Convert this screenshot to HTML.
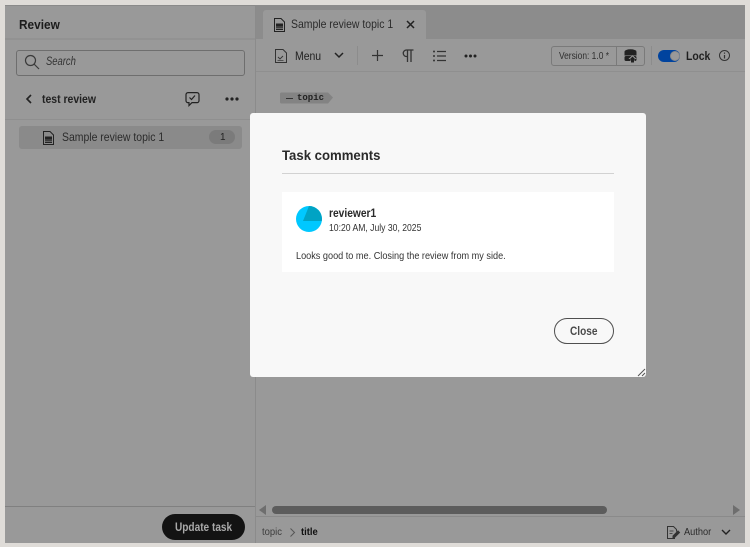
<!DOCTYPE html>
<html><head><meta charset="utf-8"><style>
html,body{margin:0;padding:0;width:750px;height:547px;overflow:hidden;background:#dfdcd8;font-family:"Liberation Sans",sans-serif}
.a{position:absolute}
.t{position:absolute;white-space:nowrap;line-height:1;transform-origin:0 0;letter-spacing:0}
svg{position:absolute;overflow:visible}
</style></head><body>
<div class="a" style="left:5px;top:5px;width:740px;height:538px;background:#999;overflow:hidden"></div>
<div class="a" style="left:5px;top:5px;width:740px;height:1px;background:#8a8a8a"></div>
<!-- left panel -->
<div class="a" style="left:5px;top:38px;width:250px;height:2px;background:#929292"></div>
<div class="a" style="left:255px;top:5px;width:1px;height:538px;background:#8b8b8b"></div>
<div class="t" style="left:19px;top:18px;font-size:13px;font-weight:bold;color:#1c1c1c;transform:scaleX(.91)">Review</div>
<div class="a" style="left:16px;top:50px;width:227px;height:24px;border:1px solid #6e6e6e;border-radius:3px"></div>
<svg style="left:25px;top:55px" width="14" height="14" fill="none" stroke="#3a3a3a" stroke-width="1.200"><circle cx="5.500" cy="5.500" r="5"/><path d="M9 9l5 5"/></svg>
<div class="t" style="left:46px;top:57px;font-size:11.500px;font-style:italic;color:#333;transform:scaleX(.82)">Search</div>
<svg style="left:25px;top:94px" width="8" height="10" fill="none" stroke="#222" stroke-width="1.600"><path d="M6 1L2 5l4 4"/></svg>
<div class="t" style="left:42px;top:93px;font-size:12px;font-weight:bold;color:#222;transform:scaleX(.87)">test review</div>
<svg style="left:185px;top:92px" width="15" height="14" fill="none" stroke="#222" stroke-width="1.200"><path d="M3 .6h9a2 2 0 0 1 2 2v6a2 2 0 0 1-2 2H7l-3 3v-3H3a2 2 0 0 1-2-2v-6a2 2 0 0 1 2-2z"/><path d="M4.500 5.500l2 2 3.500-4"/></svg>
<svg style="left:225px;top:96px" width="14" height="6" fill="#222"><circle cx="2" cy="3" r="1.600"/><circle cx="7" cy="3" r="1.600"/><circle cx="12" cy="3" r="1.600"/></svg>
<div class="a" style="left:5px;top:119px;width:250px;height:1px;background:#8f8f8f"></div>
<div class="a" style="left:19px;top:126px;width:223px;height:23px;background:#8a8a8a;border-radius:3px"></div>
<svg style="left:43px;top:131px" width="11" height="14"><path d="M.5.500h6.500l3.500 3.500v9.500h-10z" fill="#8a8a8a" stroke="#222"/><rect x="2" y="5.500" width="7" height="6.500" fill="#222"/><path d="M2 9h7M2 10.700h7" stroke="#8a8a8a" stroke-width=".6"/></svg>
<div class="t" style="left:62px;top:131px;font-size:12px;color:#2b2b2b;transform:scaleX(.87)">Sample review topic 1</div>
<div class="a" style="left:209px;top:130px;width:26px;height:14px;background:#7b7b7b;border-radius:7px"></div>
<div class="t" style="left:220px;top:133px;font-size:10px;color:#222">1</div>
<!-- bottom left -->
<div class="a" style="left:5px;top:506px;width:250px;height:1px;background:#808080"></div>
<div class="a" style="left:162px;top:514px;width:83px;height:26px;background:#131313;border-radius:13px"></div>
<div class="t" style="left:175px;top:521px;font-size:12px;font-weight:bold;color:#a9a9a9;transform:scaleX(.84)">Update task</div>
<!-- tabs -->
<div class="a" style="left:256px;top:5px;width:489px;height:34px;background:#8c8c8c"></div>
<div class="a" style="left:263px;top:10px;width:163px;height:29px;background:#999;border-radius:3px 3px 0 0"></div>
<svg style="left:274px;top:18px" width="11" height="14"><path d="M.5.500h6.500l3.500 3.500v9.500h-10z" fill="#999" stroke="#222"/><rect x="2" y="5.500" width="7" height="6.500" fill="#222"/><path d="M2 9h7M2 10.700h7" stroke="#999" stroke-width=".6"/></svg>
<div class="t" style="left:291px;top:18px;font-size:12px;color:#2b2b2b;transform:scaleX(.87)">Sample review topic 1</div>
<svg style="left:407px;top:21px" width="7" height="7" stroke="#222" stroke-width="1.500"><path d="M0 0l7 7M7 0L0 7"/></svg>
<div class="a" style="left:256px;top:71px;width:489px;height:1px;background:#8f8f8f"></div>
<!-- toolbar -->
<svg style="left:275px;top:49px" width="12" height="14" fill="none" stroke="#333" stroke-width="1"><path d="M.5.500h7.500l3.500 3.500v9.500h-11z"/><path d="M3 8l2 2 3-3" stroke-width=".9"/><path d="M2.500 11.500h6" stroke-width=".7"/></svg>
<div class="t" style="left:295px;top:50px;font-size:12px;color:#222;transform:scaleX(.87)">Menu</div>
<svg style="left:334px;top:52px" width="10" height="7" fill="none" stroke="#222" stroke-width="1.500"><path d="M1 1l4 4 4-4"/></svg>
<div class="a" style="left:357px;top:46px;width:1px;height:19px;background:#8c8c8c"></div>
<svg style="left:372px;top:50px" width="11" height="11" stroke="#333" stroke-width="1.200"><path d="M5.500 0v11M0 5.500h11"/></svg>
<svg style="left:402px;top:49px" width="12" height="13" fill="none" stroke="#333" stroke-width="1.300"><path d="M5.500 13V1h6M9 1v12M5.500 1H4.500a3.200 3.200 0 0 0 0 6.500h1"/></svg>
<svg style="left:433px;top:50px" width="13" height="12" fill="#333" stroke="#333"><path d="M4 1.500h9M4 6h9M4 10.500h9" stroke-width="1.200"/><circle cx="1" cy="1.500" r="1" stroke="none"/><circle cx="1" cy="6" r="1" stroke="none"/><circle cx="1" cy="10.500" r="1" stroke="none"/></svg>
<svg style="left:464px;top:53px" width="13" height="6" fill="#222"><circle cx="2" cy="3" r="1.500"/><circle cx="6.500" cy="3" r="1.500"/><circle cx="11" cy="3" r="1.500"/></svg>
<div class="a" style="left:551px;top:46px;width:92px;height:18px;border:1px solid #7a7a7a;border-radius:3px"></div>
<div class="a" style="left:616px;top:46px;width:1px;height:20px;background:#7a7a7a"></div>
<div class="t" style="left:559px;top:51px;font-size:10.500px;color:#2e2e2e;transform:scaleX(.8)">Version: 1.0 *</div>
<svg style="left:624px;top:49px" width="13" height="14"><ellipse cx="6.500" cy="2.500" rx="6" ry="2.200" fill="#222"/><rect x=".5" y="3" width="12" height="3.500" fill="#222"/><rect x=".5" y="7" width="12" height="5" rx="1.500" fill="#222"/><path d="M8.500 6l4 4h-2v4h-4v-4h-2z" fill="#999"/><path d="M8.500 7.500l3 3h-1.500v3h-3v-3h-1.500z" fill="#222"/></svg>
<div class="a" style="left:651px;top:46px;width:1px;height:19px;background:#8c8c8c"></div>
<div class="a" style="left:658px;top:50px;width:22px;height:12px;background:#00439e;border-radius:6px"></div>
<div class="a" style="left:670px;top:51px;width:8px;height:8px;background:#999;border-radius:50%;border:1px solid #8a8a8a"></div>
<div class="t" style="left:686px;top:50px;font-size:12px;font-weight:bold;color:#1f1f1f;transform:scaleX(.87)">Lock</div>
<svg style="left:719px;top:50px" width="11" height="11" fill="none" stroke="#333"><circle cx="5.500" cy="5.500" r="5"/><path d="M5.500 5v3.500M5.500 2.500v1.200" stroke-width="1.200"/></svg>
<!-- topic tag -->
<svg style="left:280px;top:92px" width="54" height="12"><path d="M0 1.500Q0 0 1.500 0H48l5 5-5 6H1.500Q0 11 0 9.500z" fill="#838383" transform="translate(0 .5)"/></svg>
<div class="a" style="left:286px;top:98px;width:7px;height:1px;background:#333"></div>
<div class="t" style="left:297px;top:94px;font-family:'Liberation Mono',monospace;font-size:9px;font-weight:bold;color:#222">topic</div>
<!-- modal -->
<div class="a" style="left:250px;top:113px;width:396px;height:264px;background:#f8f8f8;border-radius:3px"></div>
<div class="t" style="left:282px;top:148px;font-size:14px;font-weight:bold;color:#2a2a2a;transform:scaleX(.94)">Task comments</div>
<div class="a" style="left:282px;top:173px;width:332px;height:1px;background:#d2d2d2"></div>
<div class="a" style="left:282px;top:192px;width:332px;height:80px;background:#fff"></div>
<svg style="left:296px;top:206px" width="26" height="26"><circle cx="13" cy="13" r="13" fill="#00c8ff"/><path d="M13 0A13 13 0 0 1 25.800 15L7 15z" fill="#00a3c4"/></svg>
<div class="t" style="left:329px;top:209px;font-size:11.500px;font-weight:bold;color:#2a2a2a;transform:scaleX(.89)">reviewer1</div>
<div class="t" style="left:329px;top:223px;font-size:10.500px;color:#333;transform:scaleX(.82)">10:20 AM, July 30, 2025</div>
<div class="t" style="left:296px;top:251px;font-size:10.500px;color:#333;transform:scaleX(.87)">Looks good to me. Closing the review from my side.</div>
<div class="a" style="left:554px;top:318px;width:58px;height:24px;border:1.500px solid #4f4f4f;border-radius:13px"></div>
<div class="t" style="left:570px;top:325px;font-size:12px;font-weight:bold;color:#4a4a4a;transform:scaleX(.84)">Close</div>
<svg style="left:638px;top:369px" width="8" height="8" stroke="#555" stroke-width="1" fill="none"><path d="M0 7L7 0M4 7l3-3"/></svg>
<!-- scrollbar -->
<svg style="left:259px;top:505px" width="8" height="10" fill="#6e6e6e"><path d="M7 0v10L0 5z"/></svg>
<div class="a" style="left:272px;top:506px;width:335px;height:8px;background:#5c5c5c;border-radius:4px"></div>
<svg style="left:733px;top:505px" width="8" height="10" fill="#6e6e6e"><path d="M0 0v10l7-5z"/></svg>
<div class="a" style="left:256px;top:516px;width:489px;height:1px;background:#8a8a8a"></div>
<!-- status bar -->
<div class="t" style="left:262px;top:527px;font-size:10.500px;color:#3c3c3c;transform:scaleX(.9)">topic</div>
<svg style="left:290px;top:528px" width="5" height="9" fill="none" stroke="#555"><path d="M.5.500l4 4-4 4"/></svg>
<div class="t" style="left:301px;top:527px;font-size:10.500px;font-weight:bold;color:#111;transform:scaleX(.9)">title</div>
<svg style="left:667px;top:526px" width="13" height="13" fill="none" stroke="#333"><path d="M8 12.500H.5V.5h6l3 3v2"/><path d="M6 10l5-5 1.500 1.500-5 5H6z" fill="#333"/><path d="M2.500 5h4M2.500 7.500h3" stroke-width=".7"/></svg>
<div class="t" style="left:684px;top:527px;font-size:10.500px;color:#2a2a2a;transform:scaleX(.88)">Author</div>
<svg style="left:721px;top:529px" width="10" height="7" fill="none" stroke="#222" stroke-width="1.400"><path d="M1 1l4 4 4-4"/></svg>
</body></html>
